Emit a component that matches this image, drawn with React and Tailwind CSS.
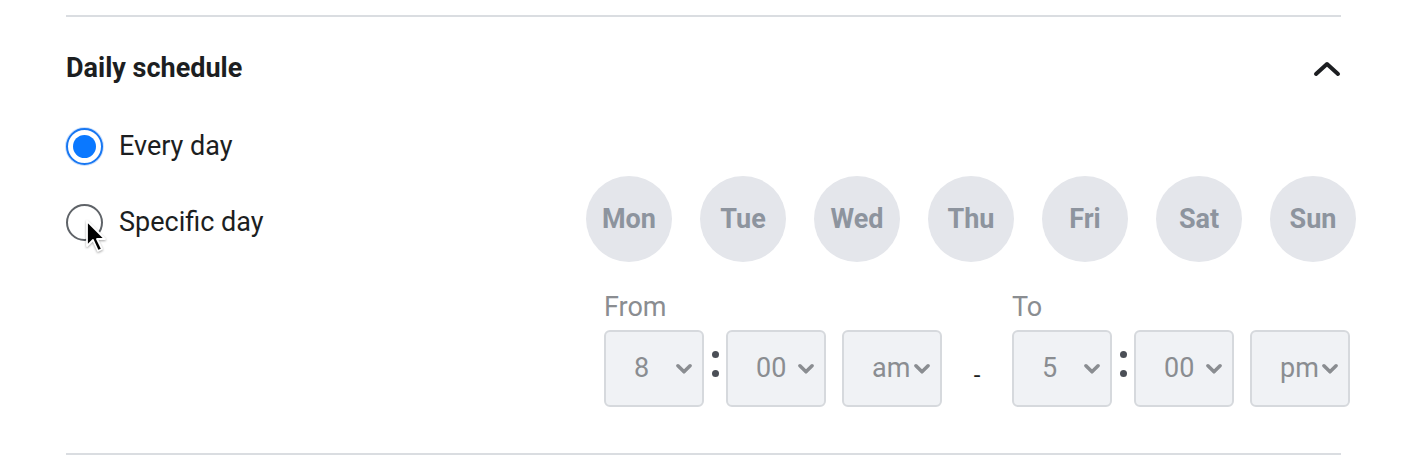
import React from "react";

const days = ["Mon", "Tue", "Wed", "Thu", "Fri", "Sat", "Sun"];

const Chevron = ({ className }) => (
  <svg viewBox="0 0 16 10" className={className} fill="none" stroke="currentColor" strokeWidth="3.2" strokeLinecap="round" strokeLinejoin="round">
    <path d="M2.5 2.5l5.5 5.5 5.5-5.5" />
  </svg>
);

const Select = ({ value }) => (
  <div className="flex h-[77px] w-[100px] shrink-0 items-center justify-between overflow-hidden rounded-[6px] border-2 border-[#d6d9dd] bg-[#f0f2f5] pl-[28px] pr-[9px] text-[27px] text-[#8a8d91]">
    <span>{value}</span>
    <Chevron className="h-[11px] w-[18px] shrink-0 text-[#8a8d91]" />
  </div>
);

const Colon = () => (
  <div className="flex w-[22px] flex-col items-center gap-[12px] pb-[10px]">
    <span className="h-[7px] w-[7px] rounded-full bg-[#4b4f56]" />
    <span className="h-[7px] w-[7px] rounded-full bg-[#4b4f56]" />
  </div>
);

const TimeGroup = ({ label, hour, minute, period }) => (
  <div className="flex flex-col">
    <p className="h-[28px] text-[27px] leading-[28px] text-[#8a8d91]">{label}</p>
    <div className="mt-[9px] flex items-center">
      <Select value={hour} />
      <Colon />
      <Select value={minute} />
      <div className="w-[16px]" />
      <Select value={period} />
    </div>
  </div>
);

const Radio = ({ checked, label, cursor }) => (
  <div className="relative flex h-[46px] items-center">
    {checked ? (
      <span className="flex h-[37px] w-[37px] items-center justify-center rounded-full border-2 border-[#1877f2] bg-white shadow-[0_0_0_1px_#cfe2fc]">
        <span className="h-[23px] w-[23px] rounded-full bg-[#0a78ff]" />
      </span>
    ) : (
      <span className="h-[37px] w-[37px] rounded-full border-2 border-[#5f6368] bg-white" />
    )}
    <span className="ml-[16px] text-[27px] text-[#1c1e21]">{label}</span>
    {cursor && (
      <svg className="absolute left-[19px] top-[20px] h-[36px] w-[24px] drop-shadow-[0_1px_1px_rgba(0,0,0,0.35)]" viewBox="0 0 24 36">
        <path d="M2 2v25l6-6 5 11 4-2-5-10h8z" fill="#000" stroke="#fff" strokeWidth="1.8" strokeLinejoin="round" />
      </svg>
    )}
  </div>
);

export default function App() {
  return (
    <div className="h-[476px] w-[1402px] overflow-hidden bg-white pl-[66px] pt-[15px]" style={{ fontFamily: "Roboto, 'Liberation Sans', sans-serif" }}>
      <div className="w-[1275px] border-y-2 border-[#dadde1]">
        <div className="flex h-[106px] items-center justify-between pb-[3px]">
          <h2 className="text-[27px] font-bold text-[#1c1e21]">Daily schedule</h2>
          <svg viewBox="0 0 28 16" className="h-[16px] w-[28px]" fill="none" stroke="#1c1e21" strokeWidth="4" strokeLinecap="round" strokeLinejoin="round">
            <path d="M3 13l11-10 11 10" />
          </svg>
        </div>
        <div className="flex">
          <div className="flex w-[520px] shrink-0 flex-col gap-[30px]">
            <Radio checked label="Every day" />
            <Radio label="Specific day" cursor />
          </div>
          <div className="mt-[53px] flex shrink-0 flex-col pb-[46px]">
            <div className="flex gap-[28px]">
              {days.map((d) => (
                <div key={d} className="flex h-[86px] w-[86px] items-center justify-center rounded-full bg-[#e4e6eb] text-[27px] font-bold text-[#8d949e]">
                  {d}
                </div>
              ))}
            </div>
            <div className="mt-[31px] flex pl-[18px]">
              <TimeGroup label="From" hour="8" minute="00" period="am" />
              <div className="flex w-[70px] items-end justify-center pb-[14px] text-[24px] text-[#1c1e21]">-</div>
              <TimeGroup label="To" hour="5" minute="00" period="pm" />
            </div>
          </div>
        </div>
      </div>
    </div>
  );
}
